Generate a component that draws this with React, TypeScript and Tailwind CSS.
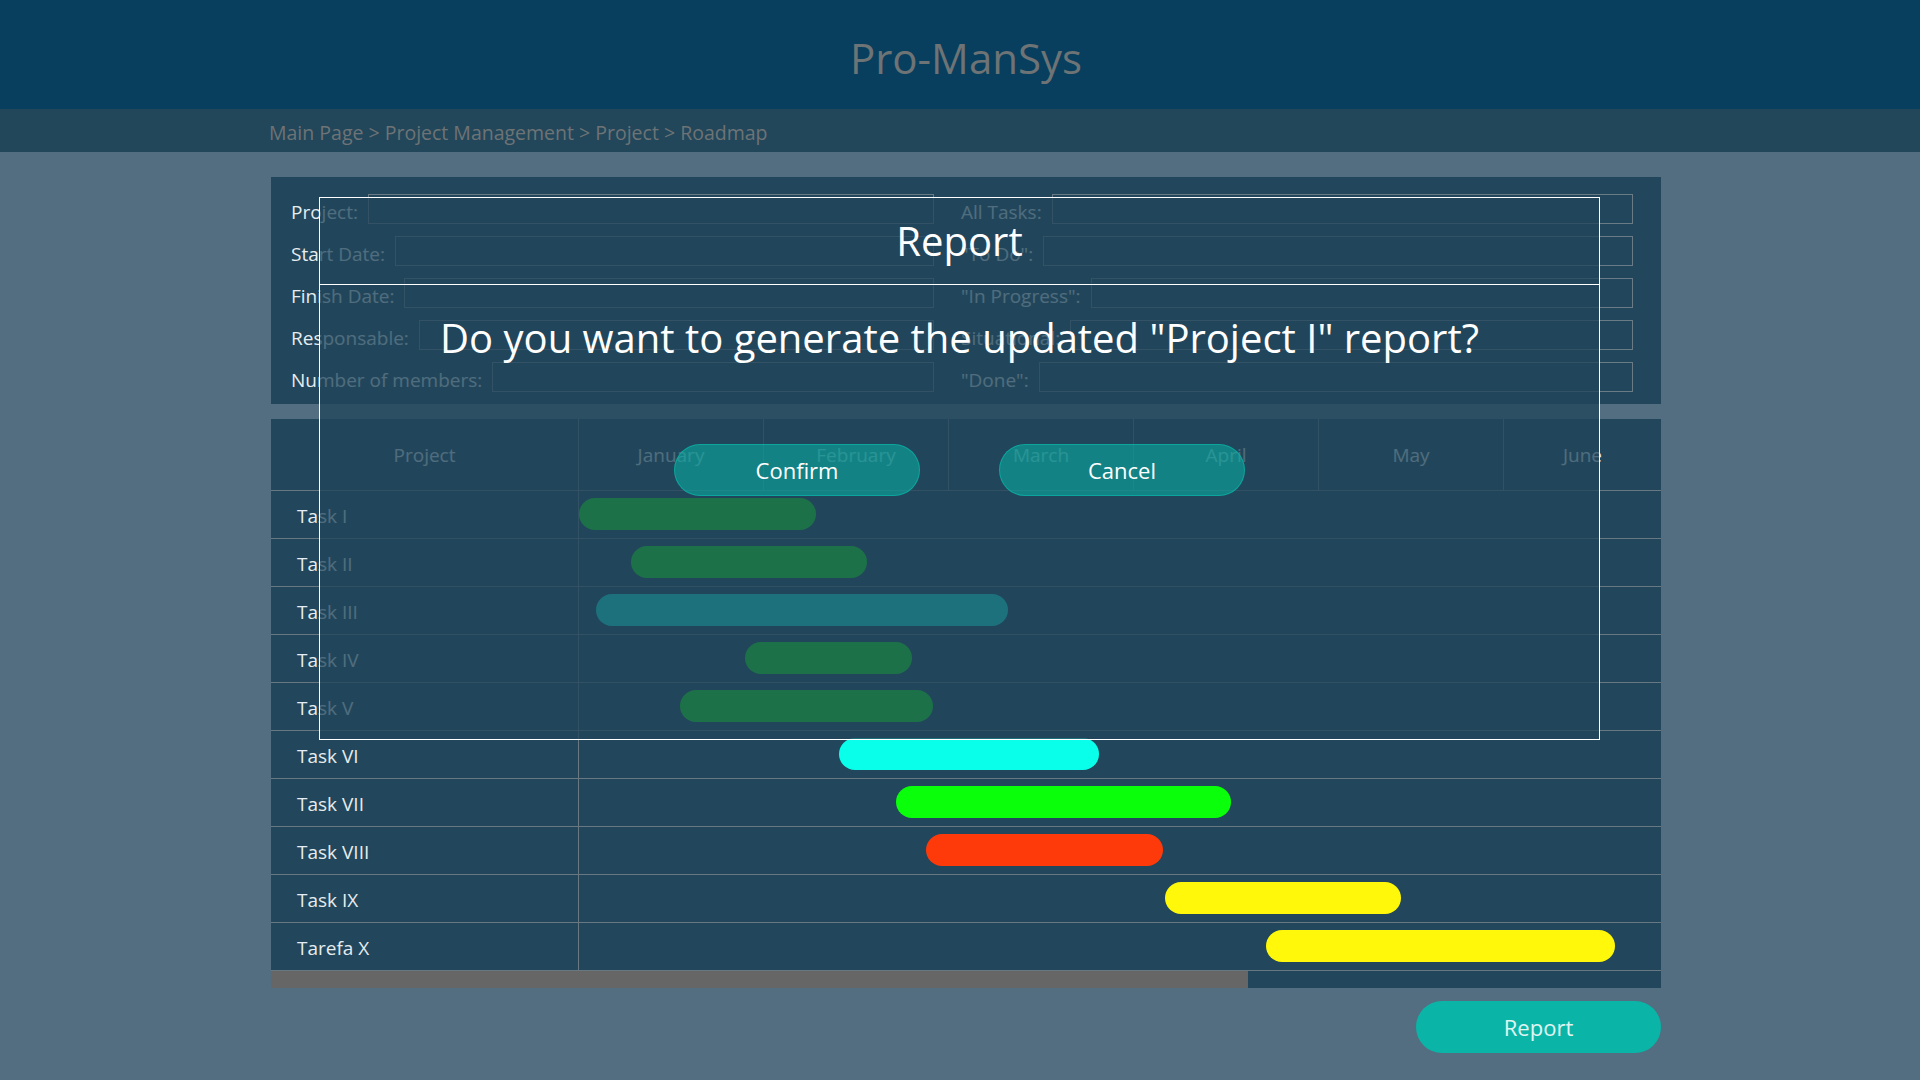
import React from 'react';

type Task = { name: string; start: number; width: number; color: string };

// bar offsets are px from the start of January
const tasks: Task[] = [
  { name: 'Task I', start: 0, width: 237, color: 'bg-[#0aff0a]' },
  { name: 'Task II', start: 52, width: 236, color: 'bg-[#0aff0a]' },
  { name: 'Task III', start: 17, width: 412, color: 'bg-[#0affea]' },
  { name: 'Task IV', start: 166, width: 167, color: 'bg-[#0aff0a]' },
  { name: 'Task V', start: 101, width: 253, color: 'bg-[#0aff0a]' },
  { name: 'Task VI', start: 260, width: 260, color: 'bg-[#0affea]' },
  { name: 'Task VII', start: 317, width: 335, color: 'bg-[#0aff0a]' },
  { name: 'Task VIII', start: 347, width: 237, color: 'bg-[#ff3a0a]' },
  { name: 'Task IX', start: 586, width: 236, color: 'bg-[#fff80a]' },
  { name: 'Tarefa X', start: 687, width: 349, color: 'bg-[#fff80a]' },
];

const months = ['January', 'February', 'March', 'April', 'May'];

const leftFields = ['Project:', 'Start Date:', 'Finish Date:', 'Responsable:', 'Number of members:'];
const rightFields = ['All Tasks:', '"To Do":', '"In Progress":', 'Situational:', '"Done":'];

function Field({ label }: { label: string }) {
  return (
    <div className="flex h-[30px] items-center gap-[10px]">
      <span className="whitespace-nowrap pt-[7px] text-[19px] text-[#e6ecef]">{label}</span>
      <div className="h-full flex-1 border border-[#6b7b85]" />
    </div>
  );
}

export default function App() {
  return (
    <div className="relative min-h-screen w-full bg-[#526e80] font-['Segoe_UI','Open_Sans',sans-serif] text-[#e6ecef]">
      <header className="flex h-[109px] items-center justify-center bg-[#083f5e] pl-[12px] pt-[5px]">
        <h1 className="text-[42px] text-[#6e7375]">Pro-ManSys</h1>
      </header>
      <nav className="flex h-[43px] items-center bg-[#22475b] pl-[269px] pt-[4px] text-[19.5px] text-[#6e7375]">
        Main Page &gt; Project Management &gt; Project &gt; Roadmap
      </nav>

      <main className="ml-[271px] w-[1390px] pt-[25px]">
        {/* summary */}
        <section className="grid grid-cols-[643px_672px] gap-x-[27px] gap-y-[12px] bg-[#22465b] pb-[12px] pl-[20px] pr-[28px] pt-[17px]">
          {leftFields.map((l, i) => (
            <React.Fragment key={l}>
              <Field label={l} />
              <Field label={rightFields[i]} />
            </React.Fragment>
          ))}
        </section>

        {/* roadmap */}
        <section className="mt-[15px] overflow-hidden bg-[#22465b]">
          <div className="flex h-[72px] border-b border-[#687780]">
            <div className="flex w-[308px] shrink-0 items-center justify-center border-r border-[#687780] pt-[2px] text-[19px]">
              Project
            </div>
            {months.map((m) => (
              <div
                key={m}
                className="flex w-[185px] shrink-0 items-center justify-center border-r border-[#687780] pt-[2px] text-[19px]"
              >
                {m}
              </div>
            ))}
            <div className="flex flex-1 items-center justify-center pt-[2px] text-[19px]">June</div>
          </div>
          {tasks.map((t) => (
            <div key={t.name} className="flex h-[48px] border-b border-[#687780]">
              <div className="flex w-[308px] shrink-0 items-center border-r border-[#687780] pl-[26px] pt-[4px] text-[19px]">
                {t.name}
              </div>
              <div className="relative flex-1">
                <div
                  className={`absolute top-[7px] h-[32px] rounded-full ${t.color}`}
                  style={{ left: t.start, width: t.width }}
                />
              </div>
            </div>
          ))}
          <div className="flex h-[17px]">
            <div className="w-[977px] bg-[#666666]" />
          </div>
        </section>

        <div className="mt-[13px] flex justify-end">
          <button className="h-[52px] w-[245px] rounded-full bg-[#0ab5a8] text-[22px] text-[#e0f5f2]">
            Report
          </button>
        </div>
      </main>

      {/* dialog */}
      <div className="absolute left-[319px] top-[197px] h-[543px] w-[1281px] border border-white bg-[#22465b]/77">
        <div className="flex h-[87px] items-center justify-center border-b border-white text-[40px] text-white">
          Report
        </div>
        <p className="mt-[26px] text-center text-[40px] leading-[54px] text-white">
          Do you want to generate the updated "Project I" report?
        </p>
        <div className="mt-[79px] flex justify-center gap-[79px]">
          <button className="h-[52px] w-[246px] rounded-full border border-[#0ab5a8]/70 bg-[#0ab5a8]/55 text-[22px] text-white">
            Confirm
          </button>
          <button className="h-[52px] w-[246px] rounded-full border border-[#0ab5a8]/70 bg-[#0ab5a8]/55 text-[22px] text-white">
            Cancel
          </button>
        </div>
      </div>
    </div>
  );
}
